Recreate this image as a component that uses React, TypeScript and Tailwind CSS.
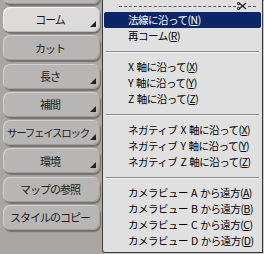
import React from "react";

const font = { fontFamily: '"Noto Sans CJK JP", "Liberation Sans", sans-serif' };

type Btn = { label: string; sub?: boolean; active?: boolean; tight?: boolean };

const buttons: Btn[] = [
  { label: "" },
  { label: "コーム", sub: true, active: true },
  { label: "カット" },
  { label: "長さ", sub: true },
  { label: "補間", sub: true },
  { label: "サーフェイスロック", sub: true, tight: true },
  { label: "環境", sub: true },
  { label: "マップの参照" },
  { label: "スタイルのコピー" },
];

function SideButton({ label, sub, active, tight }: Btn) {
  return (
    <div
      className={
        "relative h-[25px] w-[97px] shrink-0 rounded-[7px] flex items-center justify-center text-[#1c1c1c] " +
        (tight ? "text-[10.5px] tracking-[-1.3px] " : "text-[11px] tracking-[-1px] ") +
        (active
          ? "bg-[#dddbd9] shadow-[inset_1px_1px_0_#f4f3f2,inset_-1px_-1px_0_#bdbbb9,1px_2px_1px_#75736f]"
          : "bg-[#b8b6b4] shadow-[inset_1px_1px_0_#d2d0ce,inset_-1px_-1px_0_#a09e9c,1px_2px_1px_#75736f]")
      }
    >
      <span className={tight ? "pr-[7px]" : "pr-[3px]"}>{label}</span>
      {sub && (
        <svg className="absolute right-[4px] bottom-[5px]" width="6" height="6" viewBox="0 0 6 6">
          <polygon points="6,0 6,6 0,6" fill="#222" />
        </svg>
      )}
    </div>
  );
}

function Item({ children, active }: { children: React.ReactNode; active?: boolean }) {
  return (
    <div
      className={
        "h-[16px] flex items-center pl-[24px] mx-[1px] text-[10.5px] tracking-[-0.5px] leading-none whitespace-nowrap rounded-[2px] " +
        (active ? "bg-[#0b2566] text-white" : "text-black")
      }
    >
      {children}
    </div>
  );
}

function L({ c }: { c: string }) {
  return <span className="mx-[3px]">{c}</span>;
}

function Sep() {
  return (
    <div className="h-[15px] flex items-center px-[3px]">
      <div className="w-full border-t border-t-[#8c8c8c] border-b border-b-[#f4f4f4]" />
    </div>
  );
}

export default function App() {
  return (
    <div className="relative w-[264px] h-[254px] overflow-hidden bg-[#a9a7a5]" style={font}>
      <div className="flex flex-col gap-[3.3px] pl-[3px] -mt-[21.3px]">
        {buttons.map((b, i) => (
          <SideButton key={i} {...b} />
        ))}
      </div>

      {/* dropdown menu */}
      <div className="absolute left-[102px] top-0 w-[161px] h-[253px] bg-[#e0e0e0] border-l border-r border-b border-[#3a3a3a] rounded-bl-[3px] shadow-[1px_1px_0_#c8c8c8]">
        <div className="h-[12px] flex items-center pl-[16px] pr-[6px]">
          <div className="flex-1 border-t border-dashed border-[#5a5a5a]" />
          <svg width="10" height="8" viewBox="0 0 10 8" className="mx-[1px]">
            <line x1="2" y1="1" x2="9" y2="7" stroke="#222" strokeWidth="1.2" />
            <line x1="2" y1="7" x2="9" y2="1" stroke="#222" strokeWidth="1.2" />
            <circle cx="1.5" cy="1.5" r="1.2" fill="none" stroke="#222" strokeWidth="1" />
            <circle cx="1.5" cy="6.5" r="1.2" fill="none" stroke="#222" strokeWidth="1" />
          </svg>
          <div className="w-[8px] border-t border-dashed border-[#5a5a5a]" />
        </div>
        <Item active>
          法線に沿って(<u>N</u>)
        </Item>
        <Item>
          再コーム(<u>R</u>)
        </Item>
        <Sep />
        <Item>
          <span className="mr-[3px]">X</span>軸に沿って(<u>X</u>)
        </Item>
        <Item>
          <span className="mr-[3px]">Y</span>軸に沿って(<u>Y</u>)
        </Item>
        <Item>
          <span className="mr-[3px]">Z</span>軸に沿って(<u>Z</u>)
        </Item>
        <Sep />
        <Item>
          ネガティブ<L c="X" />軸に沿って(<u>X</u>)
        </Item>
        <Item>
          ネガティブ<L c="Y" />軸に沿って(<u>Y</u>)
        </Item>
        <Item>
          ネガティブ<L c="Z" />軸に沿って(<u>Z</u>)
        </Item>
        <Sep />
        <Item>
          カメラビュー<L c="A" />から遠方(<u>A</u>)
        </Item>
        <Item>
          カメラビュー<L c="B" />から遠方(<u>B</u>)
        </Item>
        <Item>
          カメラビュー<L c="C" />から遠方(<u>C</u>)
        </Item>
        <Item>
          カメラビュー<L c="D" />から遠方(<u>D</u>)
        </Item>
      </div>
    </div>
  );
}
